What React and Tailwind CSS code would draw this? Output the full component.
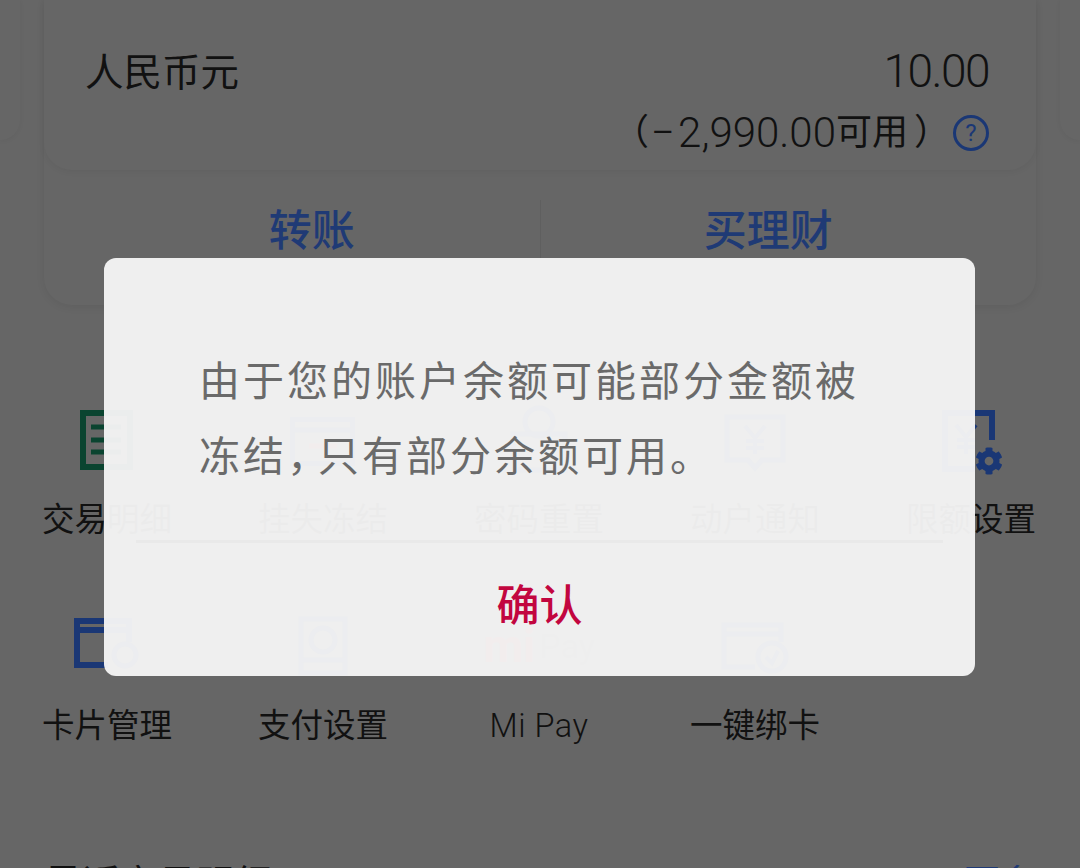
import React from 'react';
import { FaCog } from 'react-icons/fa';

const GREEN = '#0a4430';
const BLUE = '#1a3775';
const RED = '#b8323f';

function DetailIcon() {
  return (
    <svg width="80" height="80" viewBox="0 0 80 80" fill="none">
      <rect x="16" y="13" width="47" height="54" stroke={GREEN} strokeWidth="6" />
      <path d="M24 27H54M24 40H54M24 52H54" stroke={GREEN} strokeWidth="5" />
    </svg>
  );
}

function FreezeIcon() {
  return (
    <svg width="80" height="80" viewBox="0 0 80 80" fill="none">
      <rect x="9.5" y="19.5" width="60" height="44" stroke={BLUE} strokeWidth="5" />
      <path d="M10 30H70" stroke={BLUE} strokeWidth="5" />
      <path d="M26 46H54" stroke={RED} strokeWidth="5" />
    </svg>
  );
}

function LockIcon() {
  return (
    <svg width="80" height="80" viewBox="0 0 80 80" fill="none">
      <circle cx="40" cy="22" r="14" stroke={BLUE} strokeWidth="5" />
      <rect x="14" y="34" width="52" height="36" stroke={BLUE} strokeWidth="5" />
    </svg>
  );
}

function NoticeIcon() {
  return (
    <svg width="80" height="80" viewBox="0 0 80 80" fill="none">
      <path d="M12 17H68V60H47L40 68L33 60H12Z" stroke={BLUE} strokeWidth="5" />
      <path d="M30 26L40 38L50 26M40 38V54M31 41H49M31 48H49" stroke={BLUE} strokeWidth="4" />
    </svg>
  );
}

function LimitIcon() {
  return (
    <div className="relative w-[80px] h-[80px]">
      <svg width="80" height="80" viewBox="0 0 80 80" fill="none">
        <path d="M61 40V13H14V69H44" stroke={BLUE} strokeWidth="6" />
        <path d="M25 25L35 37L45 25M35 37V54M26 40H44M26 47H44" stroke={BLUE} strokeWidth="4" />
      </svg>
      <FaCog className="absolute left-[44px] top-[47px] text-[28px] text-[#1a3775]" />
    </div>
  );
}

function CardIcon() {
  return (
    <svg width="80" height="80" viewBox="0 0 80 80" fill="none">
      <path d="M62 36V15H10V59H41" stroke={BLUE} strokeWidth="6" />
      <path d="M10 24H62" stroke={BLUE} strokeWidth="6" />
      <circle cx="58" cy="49" r="11" stroke={BLUE} strokeWidth="5" />
    </svg>
  );
}

function PayIcon() {
  return (
    <svg width="80" height="80" viewBox="0 0 80 80" fill="none">
      <rect x="18" y="13" width="44" height="54" stroke={BLUE} strokeWidth="5" />
      <circle cx="40" cy="34" r="12" stroke={BLUE} strokeWidth="5" />
      <path d="M18 54H62" stroke={BLUE} strokeWidth="5" />
    </svg>
  );
}

function MiPayIcon() {
  return (
    <div className="flex items-center h-[80px] font-['Roboto',sans-serif] leading-none">
      <span className="text-[46px] font-bold text-[#b8323f]">mi</span>
      <span className="ml-[4px] text-[34px] text-[#555]">Pay</span>
    </div>
  );
}

function BindIcon() {
  return (
    <svg width="80" height="80" viewBox="0 0 80 80" fill="none">
      <path d="M66 36V19H9V61H40" stroke={BLUE} strokeWidth="5" />
      <path d="M9 28H66" stroke={BLUE} strokeWidth="5" />
      <circle cx="57" cy="51" r="14" stroke={BLUE} strokeWidth="5" />
      <path d="M51 51L57 57L63 45" stroke={BLUE} strokeWidth="4" />
    </svg>
  );
}

const menus = [
  { label: '交易明细', icon: <DetailIcon /> },
  { label: '挂失冻结', icon: <FreezeIcon /> },
  { label: '密码重置', icon: <LockIcon /> },
  { label: '动户通知', icon: <NoticeIcon /> },
  { label: '限额设置', icon: <LimitIcon /> },
  { label: '卡片管理', icon: <CardIcon /> },
  { label: '支付设置', icon: <PayIcon /> },
  { label: 'Mi Pay', icon: <MiPayIcon />, labelClass: 'font-light tracking-[0.5px]' },
  { label: '一键绑卡', icon: <BindIcon /> },
];

export default function App() {
  return (
    <div className="relative w-[1080px] h-[868px] overflow-hidden bg-[#666] text-[#111] font-['Roboto','Noto_Sans_CJK_SC',sans-serif]">
      <div className="flex items-start gap-6">
        <div className="w-5 h-[140px] rounded-br-[24px] shadow-[0_1px_5px_rgba(0,0,0,0.05)]" />
        <div className="w-[992px] h-[305px] rounded-b-[28px] shadow-[0_2px_8px_rgba(0,0,0,0.07)]">
          <div className="h-[170px] pl-[41px] pr-[47px] pt-[44px] rounded-b-[28px] shadow-[0_2px_6px_rgba(0,0,0,0.05)]">
            <div className="flex justify-between items-start">
              <span className="mt-[2px] text-[38.5px] leading-[54px]">人民币元</span>
              <span className="text-[46px] font-light tracking-[-1.5px] leading-[54px]">10.00</span>
            </div>
            <div className="flex justify-end items-center mt-[8px] leading-[50px]">
              <span className="text-[36px]">（</span>
              <span className="text-[42px] font-light ml-[2px]">−</span>
              <span className="text-[42px] font-light ml-[3px]">2,990.00</span>
              <span className="text-[36px]">可用</span>
              <span className="text-[36px] ml-[6px]">）</span>
              <span className="flex items-center justify-center w-[36px] h-[36px] ml-[3px] rounded-full border-[3px] border-[#1a3775] text-[24px] text-[#1a3775]">?</span>
            </div>
          </div>
          <div className="flex px-[40px] mt-[30px]">
            <div className="flex-1 flex justify-center border-r border-[#5f5f5f] text-[43px] font-medium leading-[62px] text-[#1f3a75]">转账</div>
            <div className="flex-1 flex justify-center text-[43px] font-medium leading-[62px] text-[#1f3a75]">买理财</div>
          </div>
        </div>
        <div className="w-5 h-[140px] rounded-bl-[24px] shadow-[0_1px_5px_rgba(0,0,0,0.05)]" />
      </div>

      <div className="grid grid-cols-5 w-[1080px] mt-[95px] -ml-px">
        {menus.map((m) => (
          <div key={m.label} className="flex flex-col items-center h-[206px]">
            <div className="flex justify-center h-[80px]">{m.icon}</div>
            <span className={`mt-[20px] text-[32.5px] leading-[40px] whitespace-nowrap ${m.labelClass || ''}`}>{m.label}</span>
          </div>
        ))}
      </div>

      <div className="flex justify-between px-[44px] mt-[45px]">
        <span className="text-[38px] leading-[54px]">最近交易明细</span>
        <span className="text-[36px] leading-[54px] text-[#1f3a75]">更多</span>
      </div>

      {/* dialog sits over the page, slightly see-through */}
      <div className="absolute left-[104px] top-[258px] w-[871px] h-[418px] rounded-[12px] bg-[#f5f5f5]/96">
        <p className="mt-[87px] ml-[95px] w-[670px] text-[41px] leading-[75px] tracking-[3px] text-[#6a6a6a]">
          由于您的账户余额可能部分金额被冻结<span className="tracking-[-10px]">，</span>只有部分余额可用。
        </p>
        <div className="mx-[32px] mt-[45px] h-[3px] bg-[#e9e9e9]" />
        <div className="flex justify-center pt-[33px] text-[43px] font-medium leading-[60px] text-[#c2063f]">确认</div>
      </div>
    </div>
  );
}
